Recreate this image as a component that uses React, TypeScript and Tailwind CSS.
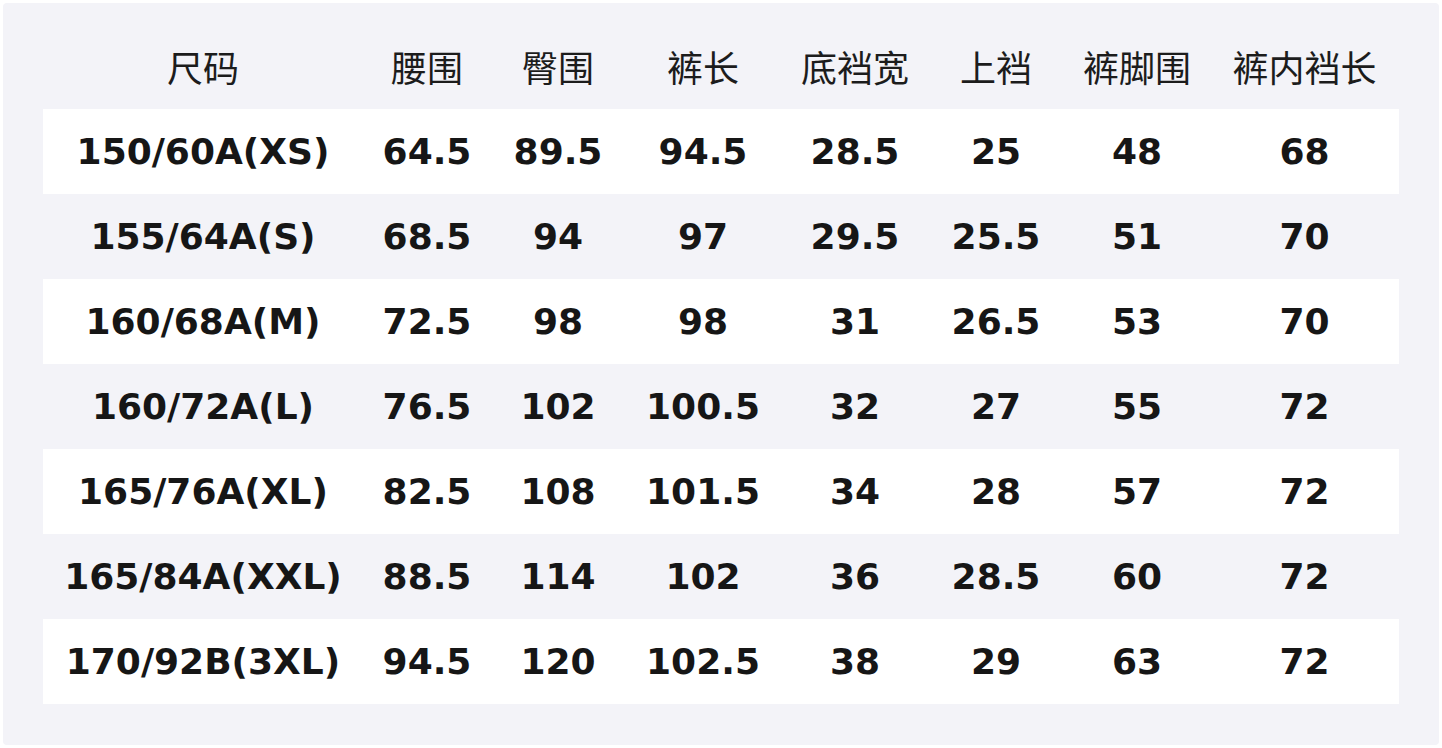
const headers = ['尺码', '腰围', '臀围', '裤长', '底裆宽', '上裆', '裤脚围', '裤内裆长'];

const rows = [
  ['150/60A(XS)', '64.5', '89.5', '94.5', '28.5', '25', '48', '68'],
  ['155/64A(S)', '68.5', '94', '97', '29.5', '25.5', '51', '70'],
  ['160/68A(M)', '72.5', '98', '98', '31', '26.5', '53', '70'],
  ['160/72A(L)', '76.5', '102', '100.5', '32', '27', '55', '72'],
  ['165/76A(XL)', '82.5', '108', '101.5', '34', '28', '57', '72'],
  ['165/84A(XXL)', '88.5', '114', '102', '36', '28.5', '60', '72'],
  ['170/92B(3XL)', '94.5', '120', '102.5', '38', '29', '63', '72'],
];

const cols = 'grid grid-cols-[320px_128px_134px_156px_148px_134px_148px_187px]';

export default function App() {
  return (
    <div className="w-[1442px] h-[748px] bg-white p-[3px]">
      <div className="h-full bg-[#f3f3f8] rounded-[4px] pt-[21px] pl-[40px] pr-[40px]">
        {/* header */}
        <div
          className={`${cols} h-[85px] items-center text-[36px] text-[#1c1c1c] font-['Noto_Sans_CJK_SC',sans-serif]`}
        >
          {headers.map((h) => (
            <div key={h} className="text-center leading-none pb-[2px]">
              {h}
            </div>
          ))}
        </div>

        {rows.map((r, i) => (
          <div
            key={i}
            className={`${cols} h-[85px] items-center ${i % 2 === 0 ? 'bg-white' : 'bg-transparent'} text-[36px] font-bold text-[#161616] font-['DejaVu_Sans',sans-serif]`}
          >
            {r.map((v, j) => (
              <div key={j} className="text-center leading-none">
                {v}
              </div>
            ))}
          </div>
        ))}
      </div>
    </div>
  );
}
